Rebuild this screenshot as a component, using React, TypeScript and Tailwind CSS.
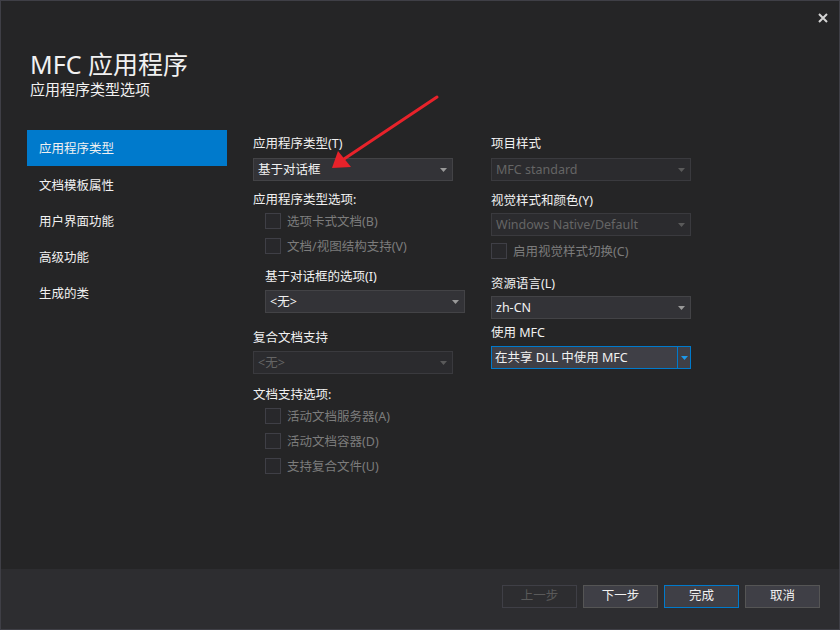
import React from "react";

function Caret({ color = "#999999" }: { color?: string }) {
  return (
    <svg width="7" height="4" viewBox="0 0 7 4" className="shrink-0">
      <polygon points="0,0 7,0 3.5,4" fill={color} />
    </svg>
  );
}

function Dropdown({
  text,
  disabled = false,
  className = "",
}: {
  text: string;
  disabled?: boolean;
  className?: string;
}) {
  return (
    <div
      className={
        "h-[23px] flex items-center justify-between pl-[4px] pr-[5px] border " +
        (disabled
          ? "bg-[#2b2b2e] border-[#3a3a3e] text-[#656565] "
          : "bg-[#333337] border-[#434346] text-[#f1f1f1] ") +
        className
      }
    >
      <span className="text-[12.5px] leading-none whitespace-nowrap pt-[1px]">{text}</span>
      <Caret color={disabled ? "#5a5a5a" : "#999999"} />
    </div>
  );
}

function Check({ label, className = "" }: { label: string; className?: string }) {
  return (
    <div className={"flex items-center h-[16px] " + className}>
      <div className="w-[16px] h-[16px] border border-[#3f3f46] bg-[#28282b] shrink-0" />
      <span className="ml-[6px] text-[12.5px] leading-none text-[#7c7c7c] whitespace-nowrap pt-[2px]">{label}</span>
    </div>
  );
}

function Label({ text, className = "" }: { text: string; className?: string }) {
  return (
    <div className={"h-[20px] flex items-center pt-[2px] text-[12.5px] text-[#f1f1f1] whitespace-nowrap " + className}>
      {text}
    </div>
  );
}

function Btn({
  text,
  kind = "normal",
}: {
  text: string;
  kind?: "normal" | "disabled" | "primary";
}) {
  const cls =
    kind === "disabled"
      ? "bg-[#2d2d30] border-[#3f3f46] text-[#5a5a5a]"
      : kind === "primary"
      ? "bg-[#3f3f46] border-[#007acc] text-[#f1f1f1]"
      : "bg-[#3f3f46] border-[#555555] text-[#f1f1f1]";
  return (
    <div className={"w-[75px] h-[23px] border flex items-center justify-center text-[12.5px] " + cls}>
      {text}
    </div>
  );
}

export default function App() {
  const nav = ["应用程序类型", "文档模板属性", "用户界面功能", "高级功能", "生成的类"];
  return (
    <div className="w-[840px] h-[630px] relative border border-[#3f3f46] bg-[#252526] flex flex-col font-['Noto_Sans','Noto_Sans_CJK_SC',sans-serif] overflow-hidden">
      {/* top bar with close */}
      <div className="h-[33px] flex justify-end items-center pr-[11px]">
        <svg width="10" height="10" viewBox="0 0 10 10">
          <path d="M1 1 L9 9 M9 1 L1 9" stroke="#d4d4d4" strokeWidth="2" />
        </svg>
      </div>

      {/* header */}
      <div className="pl-[29px]">
        <div className="mt-[15px] h-[30px] flex items-center text-[25px] text-[#f1f1f1] leading-none">
          MFC 应用程序
        </div>
        <div className="h-[20px] flex items-center text-[15px] leading-none text-[#f1f1f1]">应用程序类型选项</div>
      </div>

      {/* body */}
      <div className="flex-1 flex mt-[31px] pl-[26px]">
        <div className="w-[200px] flex flex-col">
          {nav.map((n, i) => (
            <div
              key={n}
              className={
                "h-[36px] flex items-center pl-[12px] pt-[2px] text-[12.5px] text-[#f1f1f1] " +
                (i === 0 ? "bg-[#007acc] h-[35px] mb-[1px]" : "")
              }
            >
              {n}
            </div>
          ))}
        </div>

        {/* column 1 */}
        <div className="w-[212px] ml-[26px] flex flex-col">
          <Label text="应用程序类型(T)" className="mt-[3px]" />
          <Dropdown text="基于对话框" className="mt-[5px] w-[200px]" />
          <Label text="应用程序类型选项:" className="mt-[8px]" />
          <Check label="选项卡式文档(B)" className="mt-[4px] ml-[12px]" />
          <Check label="文档/视图结构支持(V)" className="mt-[9px] ml-[12px]" />
          <Label text="基于对话框的选项(I)" className="mt-[12px] ml-[12px]" />
          <Dropdown text="<无>" className="mt-[4px] ml-[12px] w-[200px]" />
          <Label text="复合文档支持" className="mt-[14px]" />
          <Dropdown text="<无>" disabled className="mt-[4px] w-[200px]" />
          <Label text="文档支持选项:" className="mt-[10px]" />
          <Check label="活动文档服务器(A)" className="mt-[4px] ml-[12px]" />
          <Check label="活动文档容器(D)" className="mt-[9px] ml-[12px]" />
          <Check label="支持复合文件(U)" className="mt-[9px] ml-[12px]" />
        </div>

        {/* column 2 */}
        <div className="w-[200px] ml-[26px] flex flex-col">
          <Label text="项目样式" className="mt-[3px]" />
          <Dropdown text="MFC standard" disabled className="mt-[5px]" />
          <Label text="视觉样式和颜色(Y)" className="mt-[9px]" />
          <Dropdown text="Windows Native/Default" disabled className="mt-[3px]" />
          <Check label="启用视觉样式切换(C)" className="mt-[7px]" />
          <Label text="资源语言(L)" className="mt-[14px]" />
          <Dropdown text="zh-CN" className="mt-[3px]" />
          <Label text="使用 MFC" className="mt-[3px]" />
          <div className="mt-[4px] h-[23px] flex border border-[#007acc] bg-[#3f3f46] text-[#f1f1f1]">
            <div className="flex-1 flex items-center pl-[3px] pt-[1px] text-[12.5px] whitespace-nowrap">在共享 DLL 中使用 MFC</div>
            <div className="w-[13px] border-l border-[#007acc] flex items-center justify-center">
              <Caret color="#1c97ea" />
            </div>
          </div>
        </div>
      </div>

      {/* bottom bar */}
      <div className="h-[60px] bg-[#2d2d30] flex justify-end items-start pt-[16px] pr-[19px] gap-[6px]">
        <Btn text="上一步" kind="disabled" />
        <Btn text="下一步" />
        <Btn text="完成" kind="primary" />
        <Btn text="取消" />
      </div>

      {/* red annotation arrow */}
      <svg
        className="absolute left-0 top-0 pointer-events-none"
        width="840"
        height="630"
        viewBox="-1 -1 840 630"
      >
        <line x1="435" y1="95" x2="342" y2="157" stroke="#e8222a" strokeWidth="3" strokeLinecap="round" />
        <polygon points="330,166 336,149 349,165" fill="#e8222a" />
      </svg>
    </div>
  );
}
